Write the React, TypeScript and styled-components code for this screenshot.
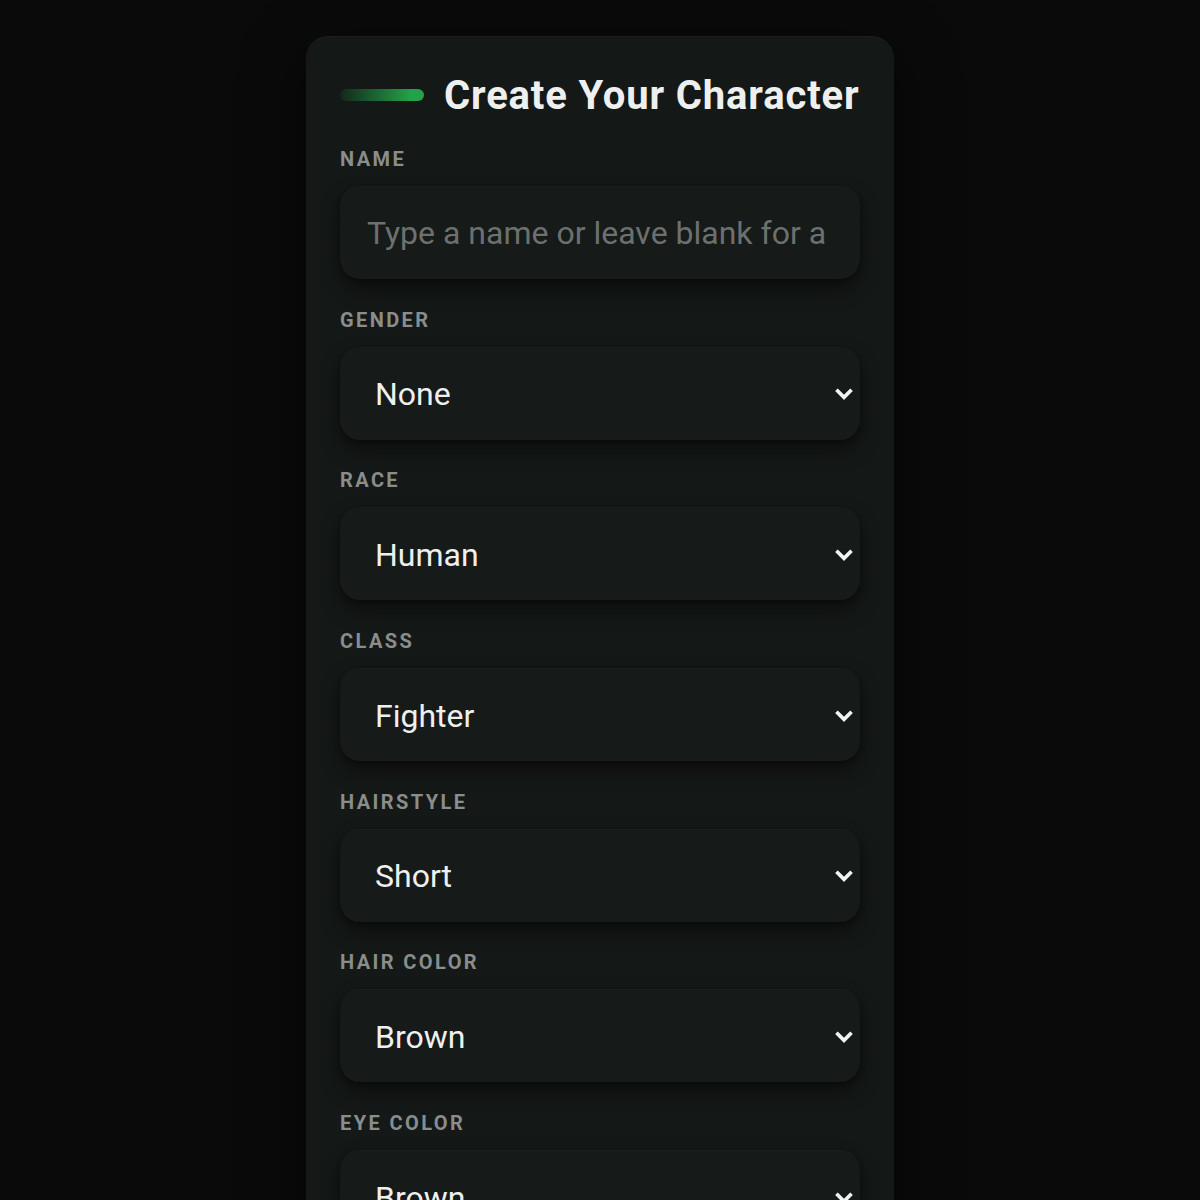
import { useState } from "react";
import styled, { createGlobalStyle } from "styled-components";

const GlobalStyle = createGlobalStyle`
  html, body {
    margin: 0;
    padding: 0;
    background: #0a0a0a;
  }
  body {
    font-family: Roboto, "Liberation Sans", sans-serif;
    color: #eef0ef;
  }
`;

const Page = styled.div`
  display: flex;
  justify-content: center;
  padding-top: 36px;
  min-height: 1200px;
  box-sizing: border-box;
`;

const Card = styled.div`
  width: 588px;
  box-sizing: border-box;
  padding: 33px 34px 40px;
  background: #141817;
  border-radius: 22px;
  box-shadow: 0 20px 60px rgba(0, 0, 0, 0.6), inset 0 1px 0 rgba(255, 255, 255, 0.03);
`;

const Header = styled.div`
  display: flex;
  align-items: center;
  gap: 20px;
  height: 52px;
  margin-bottom: 26px;
`;

const Accent = styled.span`
  width: 84px;
  height: 12px;
  border-radius: 6px;
  background: linear-gradient(90deg, rgba(34, 160, 74, 0.1), #22a34b 85%);
  flex-shrink: 0;
`;

const Title = styled.h1`
  margin: 0;
  font-size: 40px;
  font-weight: 700;
  letter-spacing: 0.85px;
  white-space: nowrap;
  color: #eef0ef;
`;

const Field = styled.div`
  display: flex;
  flex-direction: column;
  gap: 15px;
  margin-bottom: 28.7px;
`;

const Label = styled.label`
  font-size: 20px;
  line-height: 24px;
  font-weight: 700;
  letter-spacing: 2.4px;
  text-transform: uppercase;
  color: #898d8c;
`;

const controlBase = `
  width: 100%;
  height: 93px;
  box-sizing: border-box;
  border: none;
  outline: none;
  border-radius: 20px;
  background: #161a19;
  font-family: Roboto, "Liberation Sans", sans-serif;
  font-size: 32px;
  box-shadow: 0 10px 20px rgba(0, 0, 0, 0.42), 0 2px 5px rgba(0, 0, 0, 0.3),
    inset 0 1px 0 rgba(255, 255, 255, 0.025);
`;

const TextInput = styled.input`
  ${controlBase}
  padding: 0 28px 0 27px;
  color: #eef0ef;

  &::placeholder {
    color: #6c706f;
  }
`;

const SelectWrap = styled.div`
  position: relative;
`;

const Select = styled.select`
  ${controlBase}
  appearance: none;
  padding: 2px 60px 0 35px;
  color: #eef0ef;
  cursor: pointer;
`;

const Chevron = styled.svg`
  position: absolute;
  right: 6px;
  top: 50%;
  width: 20px;
  height: 20px;
  margin-top: -9px;
  pointer-events: none;
`;

const fields = [
  { label: "Gender", options: ["None", "Male", "Female"] },
  { label: "Race", options: ["Human", "Elf", "Dwarf", "Orc"] },
  { label: "Class", options: ["Fighter", "Wizard", "Rogue", "Cleric"] },
  { label: "Hairstyle", options: ["Short", "Long", "Bald", "Braided"] },
  { label: "Hair Color", options: ["Brown", "Black", "Blonde", "Red"] },
  { label: "Eye Color", options: ["Brown", "Blue", "Green", "Gray"] },
];

const App = () => {
  const [name, setName] = useState("");

  return (
    <>
      <GlobalStyle />
      <Page>
        <Card>
          <Header>
            <Accent />
            <Title>Create Your Character</Title>
          </Header>

          <Field>
            <Label htmlFor="name">Name</Label>
            <TextInput
              id="name"
              placeholder="Type a name or leave blank for a random one"
              value={name}
              onChange={(e) => setName(e.target.value)}
            />
          </Field>

          {fields.map((f) => (
            <Field key={f.label}>
              <Label>{f.label}</Label>
              <SelectWrap>
                <Select defaultValue={f.options[0]}>
                  {f.options.map((o) => (
                    <option key={o}>{o}</option>
                  ))}
                </Select>
                <Chevron viewBox="0 0 24 24" fill="none">
                  <path
                    d="M4.5 8.5l7.5 7.5 7.5-7.5"
                    stroke="#f2f4f3"
                    strokeWidth="4.4"
                    strokeLinecap="square"
                  />
                </Chevron>
              </SelectWrap>
            </Field>
          ))}
        </Card>
      </Page>
    </>
  );
};

export default App;
